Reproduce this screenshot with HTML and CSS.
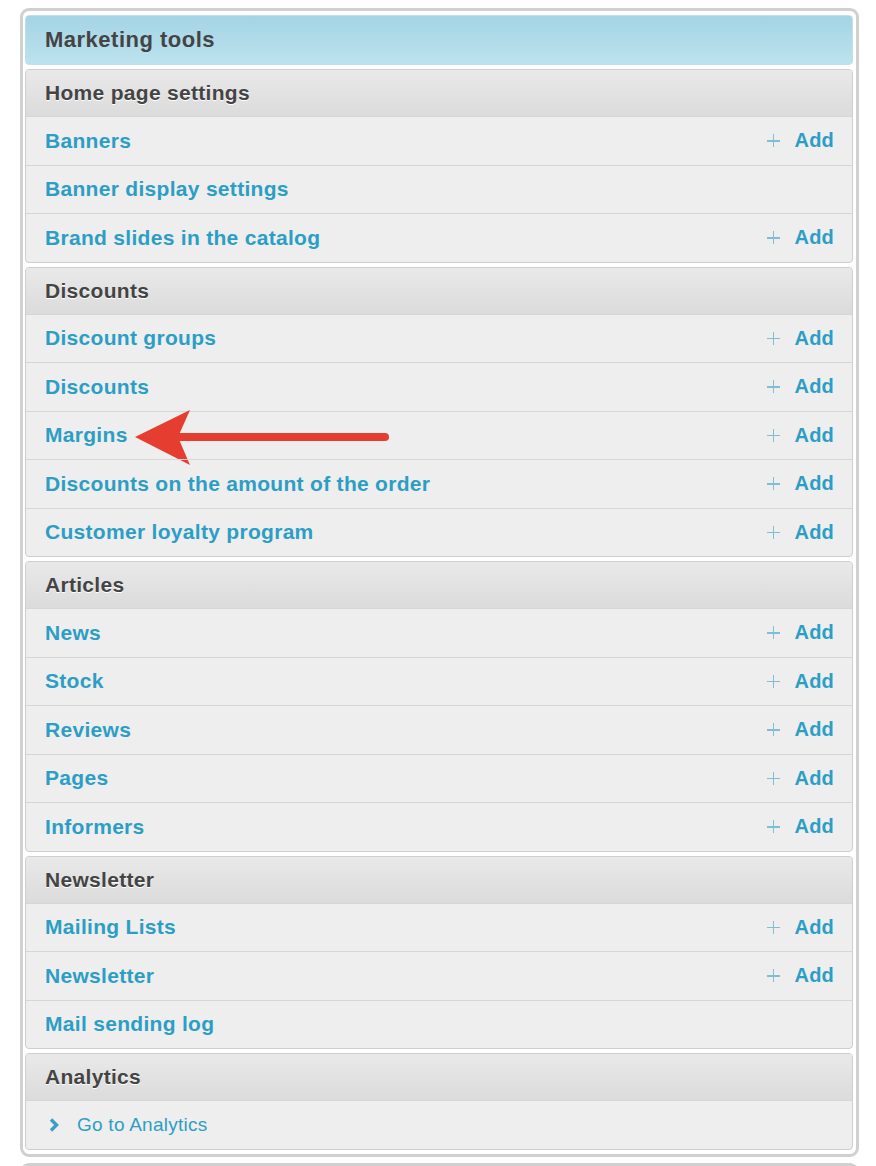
FILE: index.html
```html
<!DOCTYPE html>
<html lang="en">
  <head>
    <meta charset="UTF-8" />
    <meta name="viewport" content="width=device-width, initial-scale=1.0" />
    <title>Marketing tools</title>
    <link rel="stylesheet" href="styles.css">
  </head>
  <body>
    <div class="frame">
      <div class="title">Marketing tools</div>

      <div class="section">
        <div class="head">Home page settings</div>
        <div class="row"><a class="link">Banners</a><a class="add"><span class="plus"></span>Add</a></div>
        <div class="row"><a class="link">Banner display settings</a></div>
        <div class="row"><a class="link">Brand slides in the catalog</a><a class="add"><span class="plus"></span>Add</a></div>
      </div>

      <div class="section">
        <div class="head">Discounts</div>
        <div class="row"><a class="link">Discount groups</a><a class="add"><span class="plus"></span>Add</a></div>
        <div class="row"><a class="link">Discounts</a><a class="add"><span class="plus"></span>Add</a></div>
        <div class="row marked">
          <a class="link">Margins</a><a class="add"><span class="plus"></span>Add</a>
          <svg class="arrow" width="260" height="60" viewBox="0 0 260 60">
            <line x1="40" y1="28" x2="250" y2="28" stroke="#e53e31" stroke-width="8" stroke-linecap="round" />
            <polygon points="0,28 55,1 43,28 55,56" fill="#e53e31" />
          </svg>
        </div>
        <div class="row"><a class="link">Discounts on the amount of the order</a><a class="add"><span class="plus"></span>Add</a></div>
        <div class="row"><a class="link">Customer loyalty program</a><a class="add"><span class="plus"></span>Add</a></div>
      </div>

      <div class="section">
        <div class="head">Articles</div>
        <div class="row"><a class="link">News</a><a class="add"><span class="plus"></span>Add</a></div>
        <div class="row"><a class="link">Stock</a><a class="add"><span class="plus"></span>Add</a></div>
        <div class="row"><a class="link">Reviews</a><a class="add"><span class="plus"></span>Add</a></div>
        <div class="row"><a class="link">Pages</a><a class="add"><span class="plus"></span>Add</a></div>
        <div class="row"><a class="link">Informers</a><a class="add"><span class="plus"></span>Add</a></div>
      </div>

      <div class="section">
        <div class="head">Newsletter</div>
        <div class="row"><a class="link">Mailing Lists</a><a class="add"><span class="plus"></span>Add</a></div>
        <div class="row"><a class="link">Newsletter</a><a class="add"><span class="plus"></span>Add</a></div>
        <div class="row"><a class="link">Mail sending log</a></div>
      </div>

      <div class="section">
        <div class="head">Analytics</div>
        <div class="row">
          <a class="goto">
            <svg class="chev" width="12" height="16" viewBox="0 0 12 16">
              <polyline points="3,2.5 8.5,8 3,13.5" fill="none" stroke="#3a9fc6" stroke-width="3.4" />
            </svg>
            Go to Analytics
          </a>
        </div>
      </div>
    </div>
    <div class="frame next"></div>
  </body>
</html>
```

FILE: styles.css
```css
body {
  margin: 0;
  padding: 8px 17px 0 20px;
  background-color: #ffffff;
  font-family: "Liberation Sans", Arial, sans-serif;
}
.frame {
  border: 3px solid #d0d0d0;
  border-radius: 9px;
  padding: 4px 3px 4px 2px;
  background-color: #ffffff;
}
.frame.next {
  margin-top: 6px;
  height: 60px;
}
.title {
  height: 48px;
  display: flex;
  align-items: center;
  padding-left: 19px;
  border: 1px solid #bfe0eb;
  border-radius: 4px;
  background: linear-gradient(#a4d4e5, #bce2ee);
  color: #444444;
  font-size: 22px;
  font-weight: bold;
  letter-spacing: 0.5px;
}
.section {
  margin-top: 4px;
  border: 1px solid #cecece;
  border-radius: 4px;
  background-color: #eeeeee;
  overflow: hidden;
}
.head {
  height: 46px;
  display: flex;
  align-items: center;
  padding-left: 19px;
  background: linear-gradient(#e9e9e9, #dbdbdb);
  color: #444444;
  font-size: 21px;
  font-weight: bold;
  letter-spacing: 0.3px;
  text-shadow: 0 1px 0 #ffffff;
}
.row {
  position: relative;
  height: 47.5px;
  display: flex;
  align-items: center;
  justify-content: space-between;
  padding: 0 18px 0 19px;
  border-top: 1px solid #d6d6d6;
}
.link {
  color: #2c9ec6;
  font-size: 21px;
  font-weight: bold;
  letter-spacing: 0.3px;
}
.add {
  display: flex;
  align-items: center;
  color: #2c9ec6;
  font-size: 20px;
  font-weight: bold;
  letter-spacing: 0.2px;
}
.plus {
  position: relative;
  width: 13px;
  height: 13px;
  margin-right: 15px;
}
.plus::before,
.plus::after {
  content: "";
  position: absolute;
  background-color: #7dbfd6;
}
.plus::before {
  left: 0;
  top: 6px;
  width: 13px;
  height: 1.5px;
}
.plus::after {
  left: 6px;
  top: 0;
  width: 1.5px;
  height: 13px;
}
.goto {
  display: flex;
  align-items: center;
  gap: 17px;
  padding-left: 3px;
  color: #2c9ec6;
  font-size: 19px;
  letter-spacing: 0.25px;
}
.arrow {
  position: absolute;
  left: 109px;
  top: -3px;
}
```
